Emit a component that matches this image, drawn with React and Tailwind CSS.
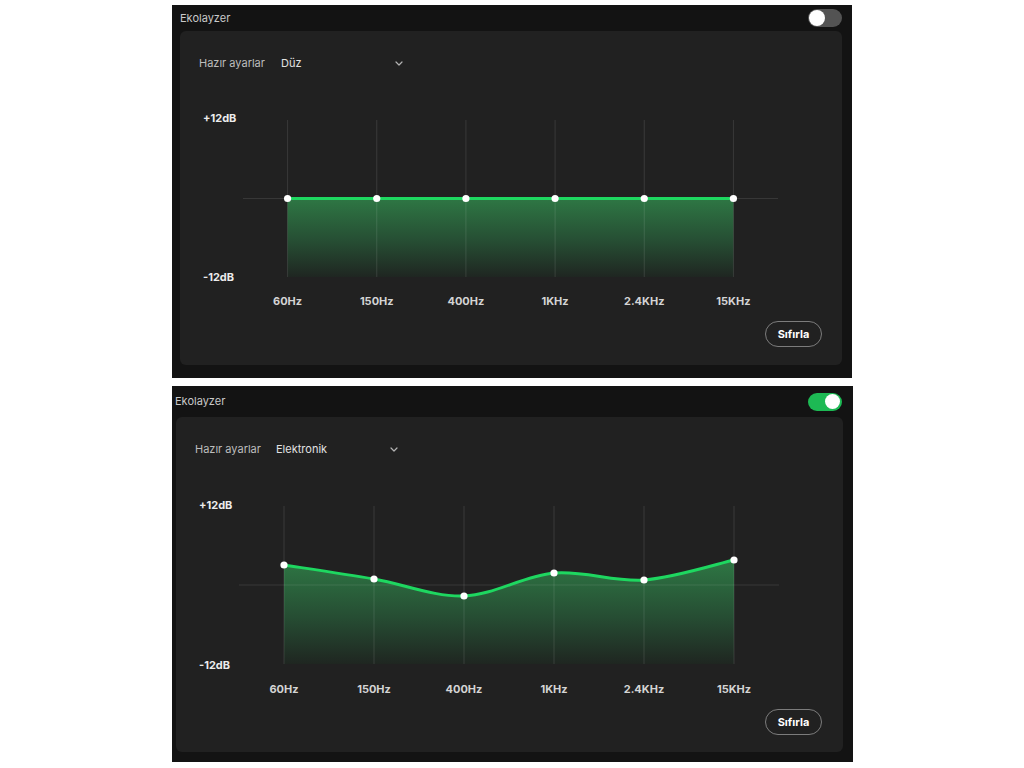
import React from "react";

const FREQS = ["60Hz", "150Hz", "400Hz", "1KHz", "2.4KHz", "15KHz"];

function buildPath(pts) {
  let d = `M${pts[0][0]},${pts[0][1]}`;
  for (let i = 0; i < pts.length - 1; i++) {
    const p0 = pts[i - 1] || pts[i];
    const p1 = pts[i];
    const p2 = pts[i + 1];
    const p3 = pts[i + 2] || p2;
    const c1x = p1[0] + (p2[0] - p0[0]) / 6;
    const c1y = p1[1] + (p2[1] - p0[1]) / 6;
    const c2x = p2[0] - (p3[0] - p1[0]) / 6;
    const c2y = p2[1] - (p3[1] - p1[1]) / 6;
    d += ` C${c1x},${c1y} ${c2x},${c2y} ${p2[0]},${p2[1]}`;
  }
  return d;
}

function Chart({ w, h, ys, id }) {
  const step = w / 6;
  const xs = ys.map((_, i) => (i + 0.5) * step);
  const pts = ys.map((y, i) => [xs[i], y]);
  const line = buildPath(pts);
  const area = `${line} L${xs[5]},${h} L${xs[0]},${h} Z`;
  return (
    <svg width={w} height={h} viewBox={`0 0 ${w} ${h}`} className="block">
      <defs>
        <linearGradient id={id} x1="0" y1="0" x2="0" y2="1">
          <stop offset="0" stopColor="#2e7744" />
          <stop offset="0.55" stopColor="#264d33" />
          <stop offset="1" stopColor="#1f2621" />
        </linearGradient>
      </defs>
      <path d={area} fill={`url(#${id})`} />
      {xs.map((x, i) => (
        <line key={i} x1={x} y1={0} x2={x} y2={h} stroke="rgba(255,255,255,0.11)" strokeWidth="1" />
      ))}
      <line x1={0} y1={h / 2} x2={w} y2={h / 2} stroke="rgba(255,255,255,0.1)" strokeWidth="1" />
      <path d={line} fill="none" stroke="#1ed760" strokeWidth="3" strokeLinecap="round" />
      {pts.map((p, i) => (
        <circle key={i} cx={p[0]} cy={p[1]} r="3.6" fill="#ffffff" />
      ))}
    </svg>
  );
}

function Chevron() {
  return (
    <svg width="8" height="5" viewBox="0 0 8 5" fill="none">
      <path d="M1 1l3 3 3-3" stroke="#b3b3b3" strokeWidth="1.2" strokeLinecap="round" strokeLinejoin="round" />
    </svg>
  );
}

function Toggle({ on }) {
  return on ? (
    <div className="w-[34px] h-[18px] rounded-full bg-[#1db954] flex items-center justify-end pr-[2px]">
      <div className="w-[15px] h-[15px] rounded-full bg-white" />
    </div>
  ) : (
    <div className="w-[34px] h-[18px] rounded-full bg-[#535353] flex items-center pl-[1px]">
      <div className="w-[16px] h-[16px] rounded-full bg-white" />
    </div>
  );
}

function Panel({ top }) {
  const w = top ? 535 : 540;
  const h = top ? 157 : 158;
  const ys = top ? [78.5, 78.5, 78.5, 78.5, 78.5, 78.5] : [59, 73, 90, 67, 74, 54];
  return (
    <div
      className={
        top
          ? "w-[680px] h-[373px] bg-[#131313] flex flex-col"
          : "w-[681px] h-[376px] bg-[#131313] flex flex-col mt-[8px]"
      }
    >
      <div
        className={
          top
            ? "h-[26px] flex items-center justify-between pl-[8px] pr-[10px]"
            : "h-[31px] flex items-center justify-between pl-[3px] pr-[11px]"
        }
      >
        <span className="text-[11px] text-[#c9c9c9]">Ekolayzer</span>
        <Toggle on={!top} />
      </div>
      <div
        className={
          top
            ? "flex-1 ml-[8px] mr-[10px] mb-[13px] rounded-[6px] bg-[#212121] flex flex-col pt-[25px] pl-[19px]"
            : "flex-1 ml-[4px] mr-[10px] mb-[10px] rounded-[6px] bg-[#212121] flex flex-col pt-[25px] pl-[19px]"
        }
      >
        <div className="flex items-center h-[14px]">
          <span className={top ? "w-[82px] text-[11px] text-[#bdbdbd]" : "w-[81px] text-[11px] text-[#bdbdbd]"}>
            Hazır ayarlar
          </span>
          <div className="w-[122px] flex items-center justify-between">
            <span className="text-[11px] text-[#e2e2e2]">{top ? "Düz" : "Elektronik"}</span>
            <Chevron />
          </div>
        </div>
        <div className={top ? "flex mt-[41px]" : "flex mt-[42px]"}>
          <div className="w-[44px] flex flex-col justify-between pl-[4px]">
            <span className="text-[11px] leading-[14px] font-bold text-[#ececec]">+12dB</span>
            <span className="text-[11px] leading-[14px] font-bold text-[#ececec]">-12dB</span>
          </div>
          <div className={top ? "pt-[9px] pb-[7px]" : "pt-[8px] pb-[8px]"}>
            <Chart w={w} h={h} ys={ys} id={top ? "g1" : "g2"} />
          </div>
        </div>
        <div className="flex mt-[10px]">
          <div className="w-[44px]" />
          <div className={top ? "w-[535px] grid grid-cols-6" : "w-[540px] grid grid-cols-6"}>
            {FREQS.map((f) => (
              <span key={f} className="text-center text-[11px] leading-[14px] font-bold text-[#d4d4d4]">
                {f}
              </span>
            ))}
          </div>
        </div>
        <div className={top ? "flex justify-end mt-[13px] pr-[20px]" : "flex justify-end mt-[13px] pr-[21px]"}>
          <button className="w-[57px] h-[26px] rounded-full border border-[#7c7c7c] text-[11px] font-bold text-white flex items-center justify-center">
            Sıfırla
          </button>
        </div>
      </div>
    </div>
  );
}

export default function App() {
  return (
    <div
      className="w-[1024px] h-[768px] bg-white pt-[5px] pl-[172px] overflow-hidden"
      style={{ fontFamily: "Inter, 'Noto Sans', sans-serif" }}
    >
      <Panel top />
      <Panel />
    </div>
  );
}
